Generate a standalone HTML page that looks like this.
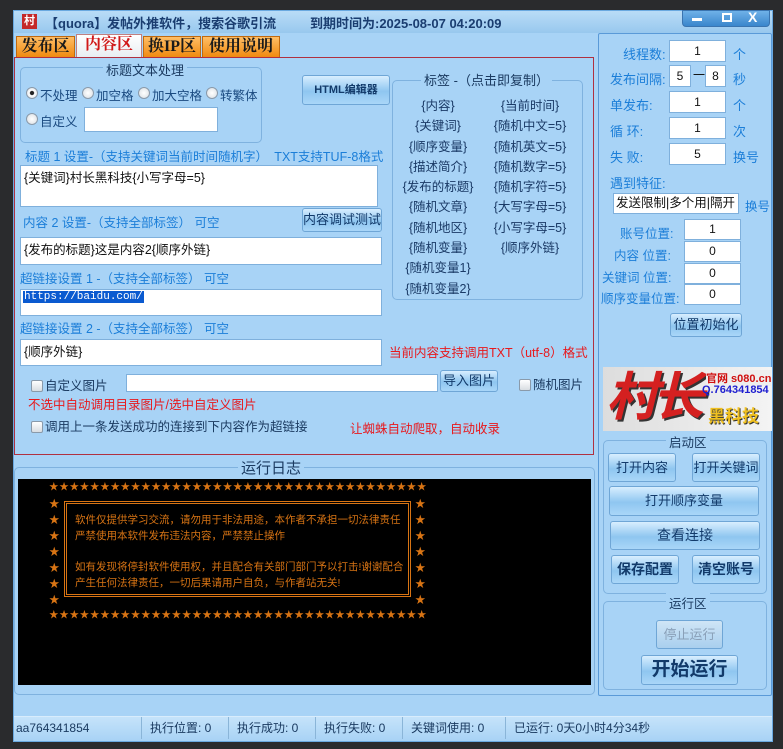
<!DOCTYPE html>
<html><head><meta charset="utf-8"><style>
*{box-sizing:border-box;margin:0;padding:0}
body{width:783px;height:749px;background:#2a2b2d;position:relative;overflow:hidden;font-family:"Liberation Sans","Noto Sans CJK SC",sans-serif;font-size:12px;color:#1a4a80}
.a{position:absolute;white-space:nowrap}
.win{left:13px;top:10px;width:760px;height:732px;background:#a8d3f6;border:1px solid #6aa9e0}
.inp{position:absolute;background:#fff;border:1px solid #7fb0dc}
.btn{position:absolute;border:1px solid #6fa6d6;border-radius:3px;background:linear-gradient(#d8eeff,#8fc6f0 55%,#a9d6f8);text-align:center;color:#123a6a;font-size:13px}
.grp{position:absolute;border:1px solid #7fb2df;border-radius:5px}
.lg{position:absolute;background:#a8d3f6;padding:0 3px;color:#1a3a60}
.blue{color:#1b7ed8}
.red{color:#e8181c}
.rad{position:absolute;width:12px;height:12px;border-radius:50%;border:1px solid #8a9aaa;background:radial-gradient(#fff,#d8dde2)}
.chk{display:inline-block;width:12px;height:12px;border:1px solid #8a9aaa;background:linear-gradient(#fff,#d8dde2);vertical-align:-2px;margin-right:2px;border-radius:2px}
.tab{position:absolute;top:36px;height:22px;background:linear-gradient(#ffbe66,#f08a10);border:1px solid #c06a10;font-size:16px;font-weight:bold;color:#1a1a1a;text-align:center;line-height:20px;font-family:"Liberation Serif","Noto Serif CJK SC",serif}
.o{position:absolute;color:#d87414;font-size:10.5px;line-height:16px;white-space:nowrap}
.srow{position:absolute;left:49px;width:378px;display:flex;justify-content:space-between;color:#d87414;font-size:9.6px;line-height:16px}
.ss{position:absolute;color:#d87414;font-size:10.5px;line-height:16px}
.sb{position:absolute;top:717px;height:22px;line-height:22px;color:#1a3a60;font-size:12px;border-left:1px solid #8ab5d8;padding-left:8px}
</style></head><body>
<div class="a win"></div>
<div class="a" style="left:14px;top:11px;width:758px;height:22px;background:linear-gradient(#b9dcf7,#98c8ee)"></div>
<div class="a" style="left:22px;top:14px;width:15px;height:15px;background:#c42828;color:#fff;font-size:11px;text-align:center;line-height:15px;font-weight:bold">村</div>
<div class="a" style="left:45px;top:13px;font-size:13px;font-weight:bold;color:#1a3d70">【quora】发帖外推软件，搜索谷歌引流</div>
<div class="a" style="left:310px;top:13px;font-size:13px;font-weight:bold;color:#1a3d70">到期时间为:2025-08-07 04:20:09</div>
<div class="a" style="left:682px;top:10px;width:88px;height:17px;background:linear-gradient(#6fb1e8,#3a86cc);border:1px solid #3a74b0;border-radius:0 0 4px 4px"></div>
<div class="a" style="left:692px;top:18px;width:10px;height:3px;background:#fff"></div>
<div class="a" style="left:722px;top:13px;width:10px;height:9px;border:2px solid #fff"></div>
<div class="a" style="left:748px;top:9px;color:#fff;font-weight:bold;font-size:14px">X</div>
<div class="tab" style="left:16px;width:59px">发布区</div>
<div class="tab" style="left:76px;top:34px;height:24px;width:66px;background:linear-gradient(#fff,#e8eef2);color:#d01818;border-color:#c08080">内容区</div>
<div class="tab" style="left:143px;width:58px">换IP区</div>
<div class="tab" style="left:202px;width:78px">使用说明</div>
<div class="a" style="left:14px;top:57px;width:580px;height:398px;border:1px solid #b03040"></div>
<div class="grp" style="left:20px;top:67px;width:242px;height:76px"></div>
<div class="lg" style="left:103px;top:60px;font-size:13px">标题文本处理</div>
<div class="rad" style="left:26px;top:87px;background:radial-gradient(#222 25%,#fff 35%,#d8dde2)"></div>
<div class="a" style="left:40px;top:85px;font-size:12.5px">不处理</div>
<div class="rad" style="left:82px;top:87px"></div>
<div class="a" style="left:96px;top:85px;font-size:12.5px">加空格</div>
<div class="rad" style="left:138px;top:87px"></div>
<div class="a" style="left:152px;top:85px;font-size:12.5px">加大空格</div>
<div class="rad" style="left:206px;top:87px"></div>
<div class="a" style="left:220px;top:85px;font-size:12.5px">转繁体</div>
<div class="rad" style="left:26px;top:113px"></div>
<div class="a" style="left:40px;top:111px;font-size:12.5px">自定义</div>
<div class="inp" style="left:84px;top:107px;width:134px;height:25px"></div>
<div class="btn" style="left:302px;top:75px;width:88px;height:30px;line-height:28px;font-size:11px;font-weight:bold">HTML编辑器</div>
<div class="grp" style="left:392px;top:80px;width:191px;height:220px"></div>
<div class="lg" style="left:421px;top:70px;font-size:13px">标签 -（点击即复制）</div>
<div class="a" style="left:398px;top:96px;line-height:20.3px;font-size:12.5px;color:#1a3a66;text-align:center;width:80px">{内容}<br>{关键词}<br>{顺序变量}<br>{描述简介}<br>{发布的标题}<br>{随机文章}<br>{随机地区}<br>{随机变量}<br>{随机变量1}<br>{随机变量2}</div>
<div class="a" style="left:490px;top:96px;line-height:20.3px;font-size:12.5px;color:#1a3a66;text-align:center;width:80px">{当前时间}<br>{随机中文=5}<br>{随机英文=5}<br>{随机数字=5}<br>{随机字符=5}<br>{大写字母=5}<br>{小写字母=5}<br>{顺序外链}</div>
<div class="a blue" style="left:25px;top:146px;font-size:12.5px">标题 1 设置-（支持关键词当前时间随机字）　TXT支持TUF-8格式</div>
<div class="inp" style="left:20px;top:165px;width:358px;height:42px"><div style="padding:1px 3px;color:#111;font-size:12.5px">{关键词}村长黑科技{小写字母=5}</div></div>
<div class="a blue" style="left:23px;top:212px;font-size:12.5px">内容 2 设置-（支持全部标签） 可空</div>
<div class="btn" style="left:302px;top:208px;width:80px;height:24px;line-height:22px">内容调试测试</div>
<div class="inp" style="left:20px;top:237px;width:362px;height:28px"><div style="padding:1px 3px;color:#111;font-size:12.5px">{发布的标题}这是内容2{顺序外链}</div></div>
<div class="a blue" style="left:20px;top:268px;font-size:12.5px">超链接设置 1 -（支持全部标签） 可空</div>
<div class="inp" style="left:20px;top:289px;width:362px;height:27px"><div style="position:absolute;left:2px;top:1px;background:#0a5ad0;color:#fff;font-size:11px;font-family:'Liberation Mono',monospace;padding:0 1px">https://baidu.com/</div></div>
<div class="a blue" style="left:20px;top:318px;font-size:12.5px">超链接设置 2 -（支持全部标签） 可空</div>
<div class="inp" style="left:20px;top:339px;width:362px;height:27px"><div style="padding:1px 3px;color:#111;font-size:12.5px">{顺序外链}</div></div>
<div class="a red" style="left:389px;top:342px;font-size:12.5px">当前内容支持调用TXT（utf-8）格式</div>
<div class="a" style="left:31px;top:375px;font-size:12.5px;color:#1a3a60"><span class="chk"></span>自定义图片</div>
<div class="inp" style="left:126px;top:374px;width:312px;height:18px"></div>
<div class="btn" style="left:440px;top:370px;width:58px;height:22px;line-height:20px">导入图片</div>
<div class="a" style="left:519px;top:374px;font-size:12.5px;color:#1a3a60"><span class="chk"></span>随机图片</div>
<div class="a red" style="left:28px;top:394px;font-size:12.5px">不选中自动调用目录图片/选中自定义图片</div>
<div class="a" style="left:31px;top:416px;font-size:12.5px;color:#1a3a60"><span class="chk"></span>调用上一条发送成功的连接到下内容作为超链接</div>
<div class="a red" style="left:350px;top:418px;font-size:12.5px">让蜘蛛自动爬取，自动收录</div>
<div class="grp" style="left:14px;top:467px;width:581px;height:228px"></div>
<div class="lg" style="left:238px;top:457px;font-size:15px">运行日志</div>
<div class="a" style="left:18px;top:479px;width:573px;height:206px;background:#000"></div>
<div class="srow" style="top:480px"><span>★</span><span>★</span><span>★</span><span>★</span><span>★</span><span>★</span><span>★</span><span>★</span><span>★</span><span>★</span><span>★</span><span>★</span><span>★</span><span>★</span><span>★</span><span>★</span><span>★</span><span>★</span><span>★</span><span>★</span><span>★</span><span>★</span><span>★</span><span>★</span><span>★</span><span>★</span><span>★</span><span>★</span><span>★</span><span>★</span><span>★</span><span>★</span><span>★</span><span>★</span><span>★</span><span>★</span><span>★</span></div>
<div class="srow" style="top:608px"><span>★</span><span>★</span><span>★</span><span>★</span><span>★</span><span>★</span><span>★</span><span>★</span><span>★</span><span>★</span><span>★</span><span>★</span><span>★</span><span>★</span><span>★</span><span>★</span><span>★</span><span>★</span><span>★</span><span>★</span><span>★</span><span>★</span><span>★</span><span>★</span><span>★</span><span>★</span><span>★</span><span>★</span><span>★</span><span>★</span><span>★</span><span>★</span><span>★</span><span>★</span><span>★</span><span>★</span><span>★</span></div>
<div class="ss" style="left:49px;top:496px">★<br>★<br>★<br>★<br>★<br>★<br>★</div>
<div class="ss" style="left:415px;top:496px">★<br>★<br>★<br>★<br>★<br>★<br>★</div>
<div class="a" style="left:64px;top:501px;width:347px;height:96px;border:3px double #d87414"></div>
<div class="o" style="left:75px;top:512px">软件仅提供学习交流，请勿用于非法用途，本作者不承担一切法律责任</div>
<div class="o" style="left:75px;top:528px">严禁使用本软件发布违法内容，严禁禁止操作</div>
<div class="o" style="left:75px;top:559px">如有发现将停封软件使用权，并且配合有关部门部门予以打击!谢谢配合</div>
<div class="o" style="left:75px;top:575px">产生任何法律责任，一切后果请用户自负，与作者站无关!</div>
<div class="grp" style="left:598px;top:33px;width:174px;height:663px;border-radius:2px;border-color:#5a9ad8"></div>
<div class="a" style="left:623px;top:44px;font-size:13px;color:#1b7ed8">线程数:</div>
<div class="inp" style="left:669px;top:40px;width:57px;height:22px;text-align:center;line-height:20px;color:#111">1</div>
<div class="a blue" style="left:733px;top:44px;font-size:13px">个</div>
<div class="a blue" style="left:610px;top:69px;font-size:13px">发布间隔:</div>
<div class="inp" style="left:669px;top:65px;width:22px;height:22px;text-align:center;line-height:20px;color:#111">5</div>
<div class="a" style="left:693px;top:66px;color:#111">一</div>
<div class="inp" style="left:705px;top:65px;width:21px;height:22px;text-align:center;line-height:20px;color:#111">8</div>
<div class="a blue" style="left:733px;top:69px;font-size:13px">秒</div>
<div class="a blue" style="left:610px;top:95px;font-size:13px">单发布:</div>
<div class="inp" style="left:669px;top:91px;width:57px;height:22px;text-align:center;line-height:20px;color:#111">1</div>
<div class="a blue" style="left:733px;top:95px;font-size:13px">个</div>
<div class="a blue" style="left:610px;top:121px;font-size:13px">循 环:</div>
<div class="inp" style="left:669px;top:117px;width:57px;height:22px;text-align:center;line-height:20px;color:#111">1</div>
<div class="a blue" style="left:733px;top:121px;font-size:13px">次</div>
<div class="a blue" style="left:610px;top:147px;font-size:13px">失 败:</div>
<div class="inp" style="left:669px;top:143px;width:57px;height:22px;text-align:center;line-height:20px;color:#111">5</div>
<div class="a blue" style="left:733px;top:147px;font-size:13px">换号</div>
<div class="a blue" style="left:610px;top:173px;font-size:13px">遇到特征:</div>
<div class="inp" style="left:613px;top:193px;width:126px;height:21px;line-height:19px;color:#111;font-size:12.5px;padding-left:2px;overflow:hidden">发送限制|多个用|隔开</div>
<div class="a blue" style="left:745px;top:196px;font-size:12.5px">换号</div>
<div class="a blue" style="left:620px;top:223px;font-size:12.5px">账号位置:</div>
<div class="inp" style="left:684px;top:219px;width:57px;height:21px;text-align:center;line-height:19px;color:#111">1</div>
<div class="a blue" style="left:614px;top:245px;font-size:12.5px">内容 位置:</div>
<div class="inp" style="left:684px;top:241px;width:57px;height:21px;text-align:center;line-height:19px;color:#111">0</div>
<div class="a blue" style="left:602px;top:267px;font-size:12.5px">关键词 位置:</div>
<div class="inp" style="left:684px;top:263px;width:57px;height:21px;text-align:center;line-height:19px;color:#111">0</div>
<div class="a blue" style="left:601px;top:288px;font-size:12.5px">顺序变量位置:</div>
<div class="inp" style="left:684px;top:284px;width:57px;height:21px;text-align:center;line-height:19px;color:#111">0</div>
<div class="btn" style="left:670px;top:313px;width:72px;height:24px;line-height:22px">位置初始化</div>
<div class="a" style="left:603px;top:367px;width:169px;height:64px;background:linear-gradient(90deg,#ddd,#f4f4f4)"></div>
<div class="a" style="left:606px;top:366px;font-size:52px;font-weight:bold;color:#d42020;font-style:italic;letter-spacing:-6px;line-height:64px;text-shadow:2px 2px 0 #333">村长</div>
<div class="a" style="left:706px;top:370px;font-size:11px;font-weight:bold;color:#d01010;background:#eee">官网 s080.cn</div>
<div class="a" style="left:702px;top:384px;font-size:11px;font-weight:bold;color:#2020d0">Q.764341854</div>
<div class="a" style="left:708px;top:402px;font-size:17px;font-weight:bold;color:#f0c020;text-shadow:1px 1px 0 #333">黑科技</div>
<div class="grp" style="left:603px;top:440px;width:164px;height:154px"></div>
<div class="lg" style="left:666px;top:432px;font-size:12.5px">启动区</div>
<div class="btn" style="left:608px;top:453px;width:68px;height:29px;line-height:27px">打开内容</div>
<div class="btn" style="left:692px;top:453px;width:68px;height:29px;line-height:27px">打开关键词</div>
<div class="btn" style="left:609px;top:486px;width:150px;height:30px;line-height:28px">打开顺序变量</div>
<div class="btn" style="left:610px;top:521px;width:150px;height:29px;line-height:27px;font-size:14px">查看连接</div>
<div class="btn" style="left:611px;top:555px;width:68px;height:29px;line-height:27px;font-size:14px;font-weight:bold">保存配置</div>
<div class="btn" style="left:692px;top:555px;width:68px;height:29px;line-height:27px;font-size:14px;font-weight:bold">清空账号</div>
<div class="grp" style="left:603px;top:601px;width:164px;height:89px"></div>
<div class="lg" style="left:666px;top:593px;font-size:12.5px">运行区</div>
<div class="btn" style="left:656px;top:620px;width:67px;height:29px;line-height:27px;color:#8aa0b8;background:linear-gradient(#cfe5f6,#a9cfee)">停止运行</div>
<div class="btn" style="left:641px;top:655px;width:97px;height:30px;line-height:28px;font-size:19px;font-weight:bold">开始运行</div>
<div class="a" style="left:14px;top:716px;width:758px;height:24px;background:linear-gradient(#c5e3fa,#a9d3f5);border-top:1px solid #d8ecfc"></div>
<div class="sb" style="left:8px;border:none;color:#1a3a60">aa764341854</div>
<div class="sb" style="left:141px">执行位置: 0</div>
<div class="sb" style="left:228px">执行成功: 0</div>
<div class="sb" style="left:315px">执行失败: 0</div>
<div class="sb" style="left:402px">关键词使用: 0</div>
<div class="sb" style="left:505px">已运行: 0天0小时4分34秒</div>
<div class="a" style="left:0;top:742px;width:783px;height:7px;background:#2a2b2d"></div>
</body></html>
